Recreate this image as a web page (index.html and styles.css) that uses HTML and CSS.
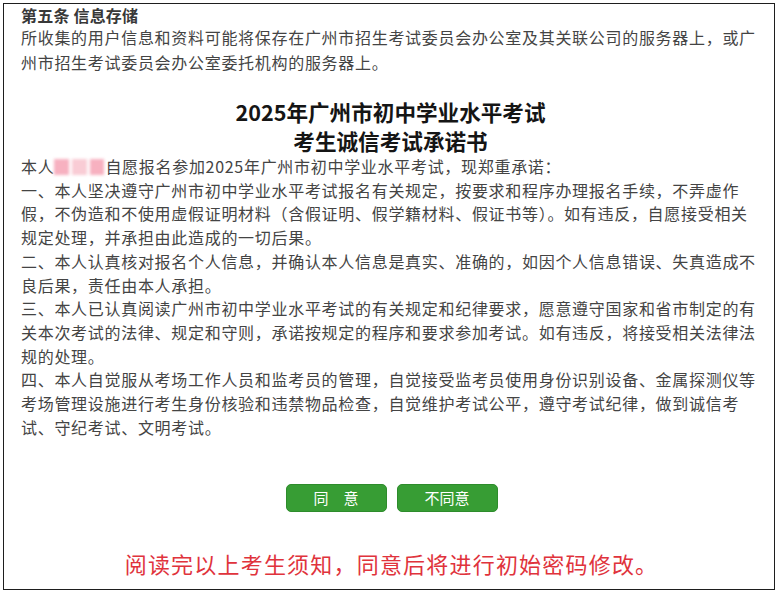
FILE: index.html
```html
<!DOCTYPE html>
<html lang="zh-CN">
<head>
<meta charset="utf-8">
<title>考生诚信考试承诺书</title>
<link rel="stylesheet" href="styles.css">
</head>
<body>
<div class="page">
  <div class="sec-title">第五条 信息存储</div>
  <p class="sec-text">所收集的用户信息和资料可能将保存在广州市招生考试委员会办公室及其关联公司的服务器上，或广州市招生考试委员会办公室委托机构的服务器上。</p>

  <h1 class="doc-title">2025年广州市初中学业水平考试<br>考生诚信考试承诺书</h1>

  <div class="pledge">
    <p>本人<span class="name"><i></i><i></i><i></i></span>自愿报名参加2025年广州市初中学业水平考试，现郑重承诺：</p>
    <p>一、本人坚决遵守广州市初中学业水平考试报名有关规定，按要求和程序办理报名手续，不弄虚作假，不伪造和不使用虚假证明材料（含假证明、假学籍材料、假证书等）。如有违反，自愿接受相关规定处理，并承担由此造成的一切后果。</p>
    <p>二、本人认真核对报名个人信息，并确认本人信息是真实、准确的，如因个人信息错误、失真造成不良后果，责任由本人承担。</p>
    <p>三、本人已认真阅读广州市初中学业水平考试的有关规定和纪律要求，愿意遵守国家和省市制定的有关本次考试的法律、规定和守则，承诺按规定的程序和要求参加考试。如有违反，将接受相关法律法规的处理。</p>
    <p>四、本人自觉服从考场工作人员和监考员的管理，自觉接受监考员使用身份识别设备、金属探测仪等考场管理设施进行考生身份核验和违禁物品检查，自觉维护考试公平，遵守考试纪律，做到诚信考试、守纪考试、文明考试。</p>
  </div>

  <div class="actions">
    <button class="btn">同　意</button>
    <button class="btn">不同意</button>
  </div>

  <div class="notice">阅读完以上考生须知，同意后将进行初始密码修改。</div>
</div>
</body>
</html>
```

FILE: styles.css
```css
html, body {
  margin: 0;
  padding: 0;
  background: #ffffff;
}

body {
  font-family: "Noto Sans CJK SC", "Noto Sans", sans-serif;
  color: #444444;
}

.page {
  margin: 3px 0 0 3px;
  width: 772px;
  height: 587px;
  box-sizing: border-box;
  border: 1.5px solid #1e1e1e;
  padding: 0 12px 0 17px;
  overflow: hidden;
}

.sec-title {
  font-size: 16px;
  line-height: 20px;
  padding-top: 1px;
  font-weight: 700;
  color: #383838;
  letter-spacing: 0.2px;
}

.sec-text {
  margin: 0;
  font-size: 16px;
  letter-spacing: 0.7px;
  line-height: 24.5px;
}

.doc-title {
  margin: 23px 0 0;
  text-align: center;
  font-size: 21.6px;
  line-height: 29px;
  font-weight: 700;
  color: #151515;
  padding-right: 2px;
}

.pledge p {
  margin: 0;
  font-size: 16px;
  letter-spacing: 0.7px;
  line-height: 23.7px;
}

.name {
  display: inline-flex;
  gap: 3px;
  width: 50px;
  height: 16px;
  vertical-align: -2px;
  margin: 0 1px 0 0;
  filter: blur(1.6px);
}

.name i {
  flex: 1;
  background: #f7b1c0;
}

.name i:nth-child(2) {
  background: #f9ccd5;
}

.actions {
  display: flex;
  justify-content: center;
  gap: 10px;
  margin-top: 45px;
}

.btn {
  width: 101px;
  height: 28px;
  border: 1px solid #2e8c2c;
  border-radius: 5px;
  background: #379d34;
  color: #ffffff;
  font-family: "Noto Sans CJK SC", sans-serif;
  font-size: 15px;
  line-height: 26px;
  padding: 0;
}

.notice {
  margin-top: 36px;
  text-align: center;
  color: #e0333c;
  font-size: 22px;
  letter-spacing: 1.2px;
  line-height: 30px;
}
```
